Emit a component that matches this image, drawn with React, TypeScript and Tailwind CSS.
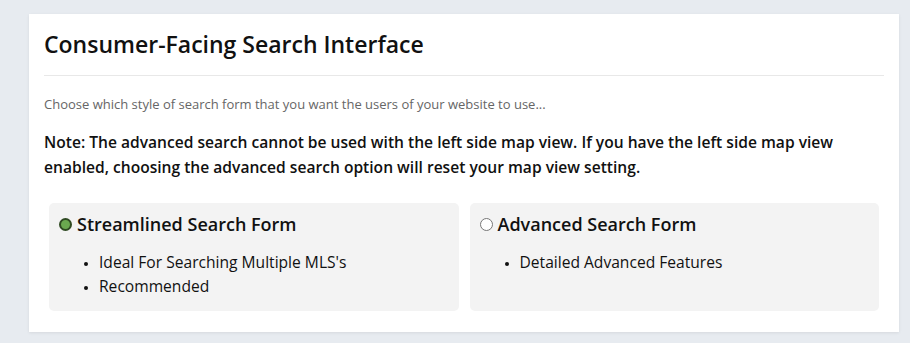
import React from "react";

export default function App() {
  return (
    <div
      className="w-[910px] h-[343px] bg-[#e7ebf0] pt-[14px] pl-[29px] pr-[11px]"
      style={{ fontFamily: "'Open Sans', Lato, sans-serif" }}
    >
      <div className="bg-white h-[318px] px-[15px] pt-[15px] shadow-[0_1px_3px_rgba(0,0,0,0.08)]">
        <h1 className="text-[23px] leading-[30px] font-semibold text-[#111]">Consumer-Facing Search Interface</h1>
        <div className="mt-[16px] border-t border-[#e8e8e8]" />
        <p className="mt-[18px] text-[13px] leading-[20px] text-[#666]">
          Choose which style of search form that you want the users of your website to use...
        </p>
        <p className="mt-[16px] text-[15.6px] leading-[25px] font-semibold text-[#111] whitespace-nowrap">
          Note: The advanced search cannot be used with the left side map view. If you have the left side map view
          <br />
          enabled, choosing the advanced search option will reset your map view setting.
        </p>
        <div className="mt-[23px] mx-[5px] grid grid-cols-2 gap-[11px]">
          <div className="bg-[#f3f3f3] rounded-[5px] h-[108px] pt-[9px] pl-[10px]">
            <div className="flex items-center gap-[5px]">
              <span className="w-[13px] h-[13px] rounded-full bg-[#6aa84f] border-[2px] border-[#2f4a22] shrink-0" />
              <span className="text-[18px] leading-[24px] font-semibold text-[#111]">Streamlined Search Form</span>
            </div>
            <ul className="mt-[14px] pl-[40px] list-disc text-[15.6px] leading-[24px] text-[#111] marker:text-[11px]">
              <li>Ideal For Searching Multiple MLS's</li>
              <li>Recommended</li>
            </ul>
          </div>
          <div className="bg-[#f3f3f3] rounded-[5px] h-[108px] pt-[9px] pl-[10px]">
            <div className="flex items-center gap-[5px]">
              <span className="w-[13px] h-[13px] rounded-full bg-white border border-[#777] shrink-0" />
              <span className="text-[18px] leading-[24px] font-semibold text-[#111]">Advanced Search Form</span>
            </div>
            <ul className="mt-[14px] pl-[40px] list-disc text-[15.6px] leading-[24px] text-[#111] marker:text-[11px]">
              <li>Detailed Advanced Features</li>
            </ul>
          </div>
        </div>
      </div>
    </div>
  );
}
